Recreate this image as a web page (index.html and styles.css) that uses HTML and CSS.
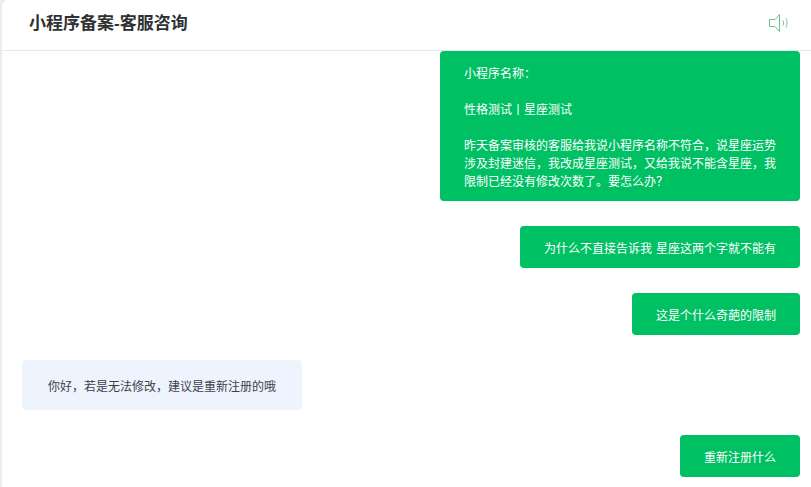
FILE: index.html
```html
<!DOCTYPE html>
<html lang="zh-CN">
<head>
<meta charset="utf-8">
<title>小程序备案-客服咨询</title>
<link rel="stylesheet" href="styles.css">
</head>
<body>
<div class="app">
  <header class="header">
    <h1 class="title">小程序备案-客服咨询</h1>
    <svg class="sound" width="22" height="20" viewBox="0 0 22 20" fill="none" aria-hidden="true">
      <path d="M1.5 5.5H7L11.5 0.5V17.5L7 12.5H1.5Z" stroke="#72c08c" stroke-width="1" stroke-linejoin="round"/>
      <path d="M15 6.5C15.9 8 15.9 10 15 11.5" stroke="#85c890" stroke-width="1" stroke-linecap="round"/>
      <path d="M18 4.5C19.5 7 19.5 11 18 13.5" stroke="#85c890" stroke-width="1" stroke-linecap="round"/>
    </svg>
  </header>
  <main class="chat">
    <div class="msg msg-me">小程序名称：<br><br>性格测试丨星座测试<br><br>昨天备案审核的客服给我说小程序名称不符合，说星座运势涉及封建迷信，我改成星座测试，又给我说不能含星座，我限制已经没有修改次数了。要怎么办？</div>
    <div class="msg msg-me">为什么不直接告诉我 星座这两个字就不能有</div>
    <div class="msg msg-me">这是个什么奇葩的限制</div>
    <div class="msg msg-agent">你好，若是无法修改，建议是重新注册的哦</div>
    <div class="msg msg-me">重新注册什么</div>
  </main>
</div>
</body>
</html>
```
FILE: styles.css
```css
* {
  box-sizing: border-box;
}

html,
body {
  margin: 0;
  height: 100%;
  overflow: hidden;
  background: #ececec;
}

body {
  padding-left: 2px;
  font-family: "Liberation Sans", "Noto Sans CJK SC", sans-serif;
}

.app {
  height: 100%;
  display: flex;
  flex-direction: column;
  background: #fff;
  border-top-left-radius: 6px;
}

.header {
  flex: none;
  height: 51px;
  display: flex;
  align-items: center;
  justify-content: space-between;
  padding: 0 21px 2px 27px;
  border-bottom: 1px solid #e6e6ee;
}

.title {
  margin: 0;
  font-size: 17px;
  font-weight: 700;
  line-height: 24px;
  color: #303133;
}

.sound {
  display: block;
}

.chat {
  flex: 1;
  display: flex;
  flex-direction: column;
  align-items: flex-end;
  gap: 25px;
  padding: 0 11px 0 20px;
}

.msg {
  font-size: 12px;
  line-height: 18px;
  word-spacing: 0.67px;
  border-radius: 4px;
}

.msg-me {
  width: fit-content;
  max-width: 360px;
  padding: 14px 24px 10px;
  color: #fff;
  background: #00c064;
}

.msg-agent {
  align-self: flex-start;
  width: 280px;
  padding: 18px 26px 14px;
  color: #3f3f4a;
  background: #edf4fe;
}
```
